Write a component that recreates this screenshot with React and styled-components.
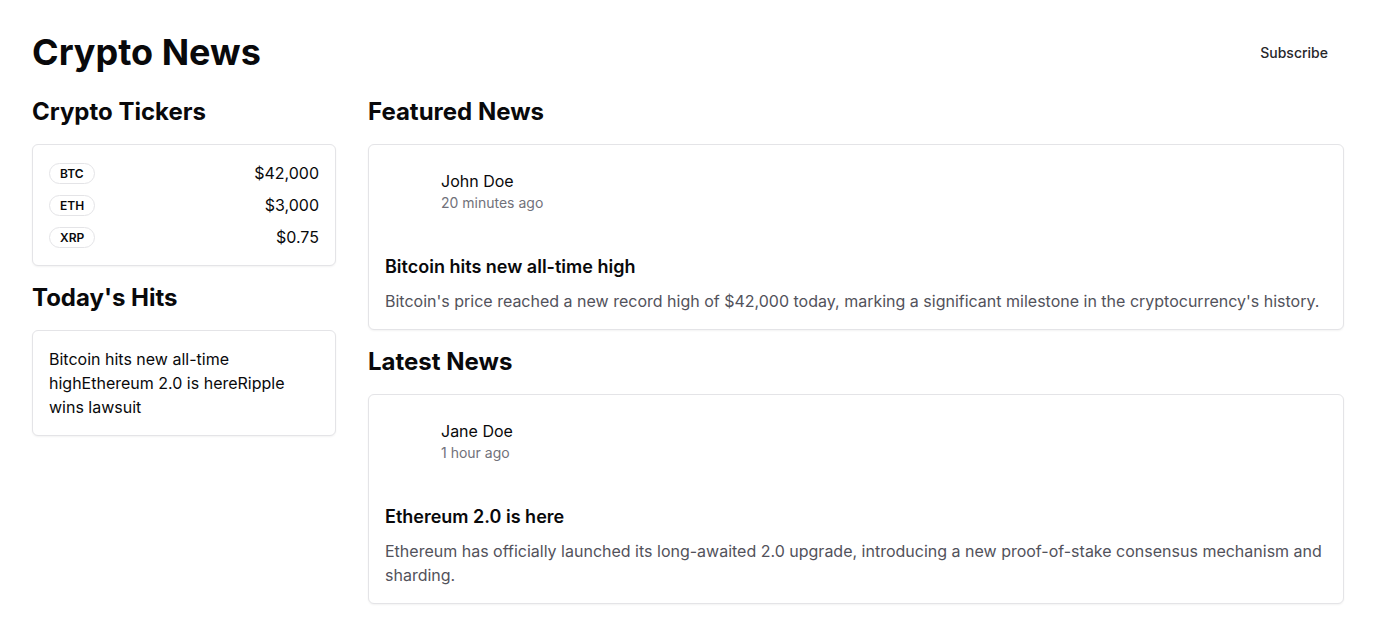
import React from "react";
import styled, { createGlobalStyle } from "styled-components";

const tickers = [
  { symbol: "BTC", price: "$42,000" },
  { symbol: "ETH", price: "$3,000" },
  { symbol: "XRP", price: "$0.75" },
];

const hits = ["Bitcoin hits new all-time high", "Ethereum 2.0 is here", "Ripple wins lawsuit"];

const featured = {
  author: "John Doe",
  time: "20 minutes ago",
  title: "Bitcoin hits new all-time high",
  body: "Bitcoin's price reached a new record high of $42,000 today, marking a significant milestone in the cryptocurrency's history.",
};

const latest = {
  author: "Jane Doe",
  time: "1 hour ago",
  title: "Ethereum 2.0 is here",
  body: "Ethereum has officially launched its long-awaited 2.0 upgrade, introducing a new proof-of-stake consensus mechanism and sharding.",
};

const GlobalStyle = createGlobalStyle`
  * { box-sizing: border-box; }
  body {
    margin: 0;
    background: #fff;
    color: #09090b;
    font-family: Inter, "Noto Sans", sans-serif;
  }
  h1, h2, h3, p { margin: 0; }
`;

const NewsCard = ({ item }) => (
  <Card>
    <Author>
      <Avatar />
      <div>
        <AuthorName>{item.author}</AuthorName>
        <Time>{item.time}</Time>
      </div>
    </Author>
    <ArticleTitle>{item.title}</ArticleTitle>
    <ArticleBody>{item.body}</ArticleBody>
  </Card>
);

const App = () => {
  return (
    <Page>
      <GlobalStyle />
      <Header>
        <Title>Crypto News</Title>
        <GhostButton>Subscribe</GhostButton>
      </Header>
      <Grid>
        <Column>
          <Section>
            <Heading>Crypto Tickers</Heading>
            <Card>
              <TickerList>
                {tickers.map((t) => (
                  <TickerRow key={t.symbol}>
                    <Badge>{t.symbol}</Badge>
                    <Price>{t.price}</Price>
                  </TickerRow>
                ))}
              </TickerList>
            </Card>
          </Section>
          <Section>
            <Heading>Today's Hits</Heading>
            <Card>
              <HitsText>{hits.join("")}</HitsText>
            </Card>
          </Section>
        </Column>
        <Column>
          <Section>
            <Heading>Featured News</Heading>
            <NewsCard item={featured} />
          </Section>
          <Section>
            <Heading>Latest News</Heading>
            <NewsCard item={latest} />
          </Section>
        </Column>
      </Grid>
    </Page>
  );
};

const Page = styled.div`
  padding: 32px;
`;

const Header = styled.header`
  display: flex;
  align-items: center;
  justify-content: space-between;
  margin-bottom: 24px;
`;

const Title = styled.h1`
  font-size: 36px;
  line-height: 40px;
  font-weight: 700;
`;

const GhostButton = styled.button`
  height: 40px;
  padding: 0 16px;
  border: none;
  background: transparent;
  border-radius: 6px;
  font-family: Inter, sans-serif;
  font-size: 14px;
  font-weight: 500;
  color: #27272a;
  cursor: pointer;
`;

const Grid = styled.div`
  display: grid;
  grid-template-columns: 304px 1fr;
  gap: 32px;
`;

const Column = styled.div`
  display: flex;
  flex-direction: column;
  gap: 16px;
`;

const Section = styled.section`
  display: flex;
  flex-direction: column;
  gap: 16px;
`;

const Heading = styled.h2`
  font-size: 24px;
  line-height: 32px;
  font-weight: 700;
`;

const Card = styled.div`
  border: 1px solid #e4e4e7;
  border-radius: 6px;
  background: #fff;
  box-shadow: 0 1px 2px rgba(0, 0, 0, 0.05);
  padding: 16px;
`;

const TickerList = styled.div`
  display: flex;
  flex-direction: column;
  gap: 8px;
`;

const TickerRow = styled.div`
  display: flex;
  align-items: center;
  justify-content: space-between;
  height: 24px;
`;

const Badge = styled.span`
  display: inline-flex;
  align-items: center;
  height: 21px;
  padding: 0 10px;
  border: 1px solid #e4e4e7;
  border-radius: 999px;
  font-size: 12px;
  font-weight: 600;
`;

const Price = styled.span`
  font-size: 16px;
  line-height: 24px;
`;

const HitsText = styled.p`
  font-size: 16px;
  line-height: 24px;
`;

const Author = styled.div`
  display: flex;
  align-items: center;
  gap: 16px;
  margin-top: 8px;
`;

const Avatar = styled.div`
  width: 40px;
  height: 40px;
  flex-shrink: 0;
`;

const AuthorName = styled.p`
  font-size: 16px;
  line-height: 24px;
`;

const Time = styled.p`
  font-size: 14px;
  line-height: 20px;
  color: #71717a;
`;

const ArticleTitle = styled.h3`
  margin-top: 40px;
  font-size: 18px;
  line-height: 28px;
  font-weight: 600;
`;

const ArticleBody = styled.p`
  margin-top: 8px;
  font-size: 16px;
  line-height: 24px;
  color: #52525b;
`;

export default App;
